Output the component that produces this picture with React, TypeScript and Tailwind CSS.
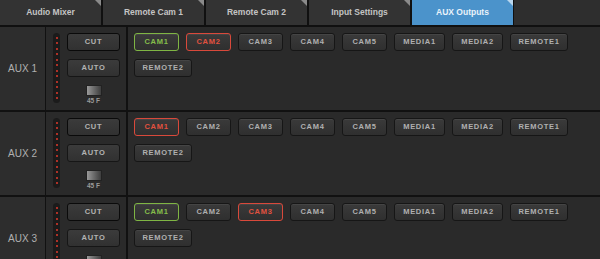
import React from 'react';

const tabs = ['Audio Mixer', 'Remote Cam 1', 'Remote Cam 2', 'Input Settings', 'AUX Outputs'];
const sources = ['CAM1', 'CAM2', 'CAM3', 'CAM4', 'CAM5', 'MEDIA1', 'MEDIA2', 'REMOTE1', 'REMOTE2'];

type Tone = 'green' | 'red' | undefined;

interface AuxRow {
  name: string;
  tones: Record<string, Tone>;
}

const rows: AuxRow[] = [
  { name: 'AUX 1', tones: { CAM1: 'green', CAM2: 'red' } },
  { name: 'AUX 2', tones: { CAM1: 'red' } },
  { name: 'AUX 3', tones: { CAM1: 'green', CAM3: 'red' } },
];

function widthFor(label: string) {
  if (label.startsWith('REMOTE')) return 'w-[58px]';
  if (label.startsWith('MEDIA')) return 'w-[51px]';
  return 'w-[45px]';
}

function SourceButton({ label, tone }: { label: string; tone: Tone }) {
  const look =
    tone === 'green'
      ? 'border-[#7fb544] text-[#86bf4a]'
      : tone === 'red'
      ? 'border-[#d9493b] text-[#e2513f]'
      : 'border-[#161616] text-[#b0b0b0]';
  return (
    <div
      className={`${widthFor(label)} h-[18px] flex items-center justify-center rounded-[3px] border bg-gradient-to-b from-[#3a3a3a] to-[#2f2f2f] shadow-[inset_0_1px_0_rgba(255,255,255,0.06)] text-[7.5px] font-bold tracking-[0.7px] ${look}`}
    >
      {label}
    </div>
  );
}

function Meter() {
  return (
    <div className="w-[7px] h-[70px] rounded-full bg-[#1b1b1b] flex flex-col items-center justify-between py-[4px]">
      {Array.from({ length: 12 }).map((_, i) => (
        <div key={i} className="w-[2px] h-[2px] rounded-full bg-[#e03a2c]" />
      ))}
    </div>
  );
}

function Controls() {
  return (
    <div className="w-[81px] border-r border-[#111] flex pt-[6px] pl-[7px] gap-[7px]">
      <Meter />
      <div className="flex flex-col items-center gap-[8px]">
        <div className="w-[53px] h-[18px] flex items-center justify-center rounded-[3px] border border-[#0a0a0a] bg-gradient-to-b from-[#3b3b3b] to-[#313131] text-[7.5px] font-bold tracking-[0.7px] text-[#b4b4b4]">
          CUT
        </div>
        <div className="w-[53px] h-[18px] flex items-center justify-center rounded-[3px] border border-[#161616] bg-gradient-to-b from-[#3b3b3b] to-[#313131] text-[7.5px] font-bold tracking-[0.7px] text-[#b4b4b4]">
          AUTO
        </div>
        <div className="flex flex-col items-center">
          <div className="w-[16px] h-[11px] bg-gradient-to-r from-[#9a9a9a] to-[#3e3e3e] border border-[#222]" />
          <div className="text-[6.5px] font-bold text-[#9a9a9a] mt-[1px] leading-[8px]">45 F</div>
        </div>
      </div>
    </div>
  );
}

export default function App() {
  return (
    <div
      className="w-[600px] h-[259px] overflow-hidden bg-[#2a2a2a] select-none"
      style={{ fontFamily: '"Liberation Sans", Arial, sans-serif' }}
    >
      {/* tab bar */}
      <div className="flex h-[27px] bg-[#101010] border-b-2 border-[#101010]">
        <div className="flex gap-[2px]">
          {tabs.map((t) => {
            const active = t === 'AUX Outputs';
            return (
              <div
                key={t}
                className={`relative w-[101px] h-[25px] flex items-center justify-center text-[8.5px] font-bold ${
                  active ? 'bg-[#4b93cb] text-[#eaf2fa]' : 'bg-[#333333] text-[#c4c4c4]'
                }`}
              >
                {t}
                <div
                  className={`absolute top-0 right-0 w-0 h-0 border-t-[6px] border-l-[6px] border-l-transparent ${
                    active ? 'border-t-[#b9d6ee]' : 'border-t-[#8a8a8a]'
                  }`}
                />
              </div>
            );
          })}
        </div>
        <div className="flex-1 ml-[1px] bg-[#2e2e2e]" />
      </div>

      {/* aux rows */}
      <div className="flex flex-col">
        {rows.map((r) => (
          <div key={r.name} className="flex h-[85px] border-b-2 border-[#111] shrink-0">
            <div className="w-[46px] border-r border-[#111] bg-[#2d2d2d] flex items-center justify-center text-[10px] text-[#b0b0b0]">
              {r.name}
            </div>
            <Controls />
            <div className="flex-1 border-l border-[#111] pl-[6px] pt-[6px]">
              <div className="flex flex-wrap gap-x-[7px] gap-y-[8px] w-[440px]">
                {sources.map((s) => (
                  <SourceButton key={s} label={s} tone={r.tones[s]} />
                ))}
              </div>
            </div>
          </div>
        ))}
      </div>
    </div>
  );
}
